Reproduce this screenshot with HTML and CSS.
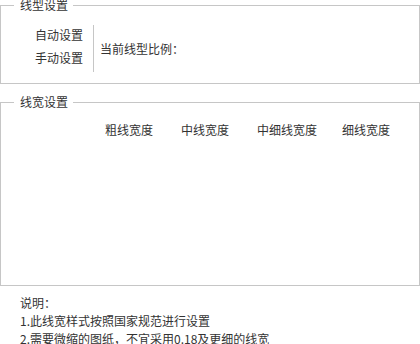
FILE: index.html
```html
<!DOCTYPE html>
<html lang="zh-CN">
<head>
<meta charset="utf-8">
<link rel="stylesheet" href="styles.css">
</head>
<body>
<fieldset class="group group-type">
  <legend class="group-title">线型设置</legend>
  <div class="type-body">
    <div class="type-options">
      <div class="opt">自动设置</div>
      <div class="opt">手动设置</div>
    </div>
    <div class="type-ratio">当前线型比例：</div>
  </div>
</fieldset>
<fieldset class="group group-width">
  <legend class="group-title">线宽设置</legend>
  <div class="width-body">
    <div class="width-head">
      <span class="col">粗线宽度</span>
      <span class="col">中线宽度</span>
      <span class="col">中细线宽度</span>
      <span class="col col-last">细线宽度</span>
    </div>
  </div>
</fieldset>
<div class="notes">
  <div>说明：</div>
  <div>1.此线宽样式按照国家规范进行设置</div>
  <div>2.需要微缩的图纸，不宜采用0.18及更细的线宽</div>
</div>
</body>
</html>
```
FILE: styles.css
```css
html, body {
  margin: 0;
  padding: 0;
  background: #fff;
}
body {
  width: 420px;
  height: 344px;
  overflow: hidden;
  font-family: "Noto Sans CJK SC", "Noto Sans", sans-serif;
  font-size: 12px;
  color: #333;
}
.group {
  box-sizing: border-box;
  width: 420px;
  margin: 0;
  padding: 0;
  border: 1px solid #c6c6c6;
  min-inline-size: 0;
}
.group-title {
  margin-left: 13px;
  padding: 0 5px 0 6px;
  line-height: 12px;
  height: 12px;
}
.group-type {
  margin-top: -1px;
}
.type-body {
  display: flex;
  align-items: center;
  margin-top: 14px;
  margin-bottom: 11px;
}
.type-options {
  box-sizing: border-box;
  width: 93px;
  height: 47px;
  padding: 1px 10px 5px 0;
  display: flex;
  flex-direction: column;
  align-items: flex-end;
  gap: 5px;
  border-right: 1px solid #c6c6c6;
}
.opt {
  line-height: 18px;
}
.type-ratio {
  padding-left: 6px;
  line-height: 18px;
}
.group-width {
  margin-top: 12px;
}
.width-body {
  height: 164px;
}
.width-head {
  display: flex;
  gap: 28px;
  padding-left: 104px;
  margin-top: 13px;
  line-height: 18px;
}
.col-last {
  margin-left: -3px;
}
.notes {
  margin-top: 8px;
  padding-left: 20px;
  line-height: 18px;
}
```
